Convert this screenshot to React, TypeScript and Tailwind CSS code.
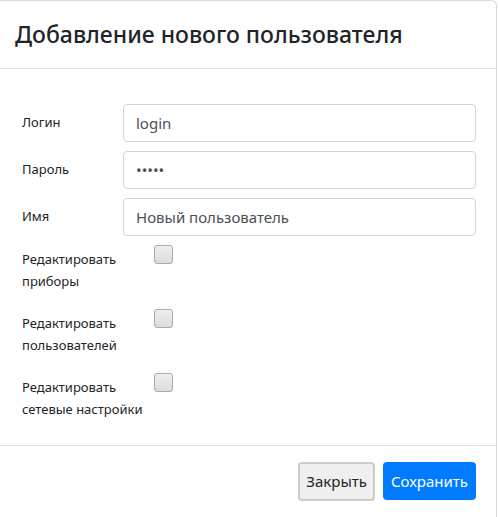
export default function App() {
  const fields = [
    { label: 'Логин', value: 'login', type: 'text' },
    { label: 'Пароль', value: '12345', type: 'password' },
    { label: 'Имя', value: 'Новый пользователь', type: 'text' },
  ];

  const perms = [
    'Редактировать приборы',
    'Редактировать пользователей',
    'Редактировать сетевые настройки',
  ];

  return (
    <div
      className="w-[498px] h-[517px] overflow-hidden bg-white"
      style={{ fontFamily: '"Noto Sans", "Open Sans", sans-serif' }}
    >
      <div className="w-[497px] h-[540px] border-t border-r border-[#d9d9d9] rounded-tr-[6px] bg-white">
        {/* header */}
        <div className="h-[68px] flex items-center px-[15px] border-b border-[#dee2e6]">
          <h5 className="text-[23px] font-medium text-[#212529] leading-none">Добавление нового пользователя</h5>
        </div>

        {/* body */}
        <div className="pl-[22px] pr-[20px] pt-[35px] pb-[25px]">
          {fields.map((f) => (
            <div key={f.label} className="flex items-center mb-[9px]">
              <label className="w-[101px] text-[13px] text-[#212529]">{f.label}</label>
              <input
                readOnly
                type={f.type}
                defaultValue={f.value}
                className="flex-1 h-[38px] px-[12px] text-[15px] text-[#495057] border border-[#ced4da] rounded-[4px] outline-none"
              />
            </div>
          ))}

          <div className="mt-[8px]">
            {perms.map((p) => (
              <div key={p} className="flex items-start h-[64px]">
                <label className="w-[132px] pt-[3px] text-[13px] leading-[22px] text-[#212529]">{p}</label>
                <input
                  type="checkbox"
                  className="appearance-none w-[19px] h-[19px] rounded-[3px] border border-[#a9a9a9] bg-linear-to-b from-[#eeeeee] to-[#dcdcdc]"
                />
              </div>
            ))}
          </div>
        </div>

        {/* footer */}
        <div className="flex justify-end gap-[8px] pt-[16px] pr-[20px] border-t border-[#dee2e6] -mt-[17px]">
          <button className="h-[39px] px-[6px] text-[15px] text-[#212529] bg-[#efefef] border-2 border-[#cccccc] rounded-[4px]">
            Закрыть
          </button>
          <button className="h-[38px] px-[8px] text-[15px] text-white bg-[#007bff] rounded-[4px]">
            Сохранить
          </button>
        </div>
      </div>
    </div>
  );
}
